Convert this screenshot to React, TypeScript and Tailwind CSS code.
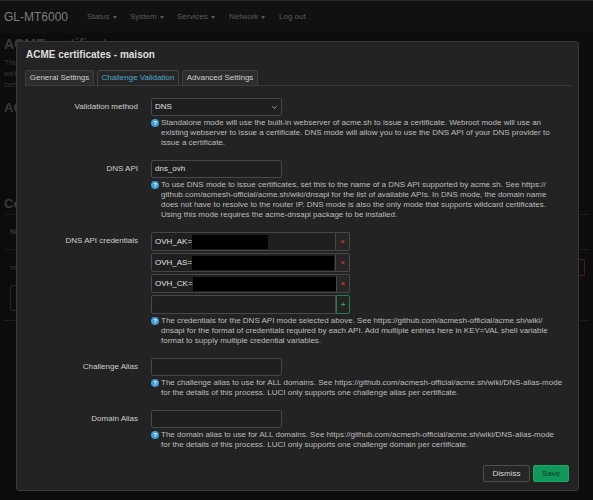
import { ChevronDown } from "lucide-react";

const helpValidation = [
  "Standalone mode will use the built-in webserver of acme.sh to issue a certificate. Webroot mode will use an",
  "existing webserver to issue a certificate. DNS mode will allow you to use the DNS API of your DNS provider to",
  "issue a certificate.",
];

const helpDnsApi = [
  "To use DNS mode to issue certificates, set this to the name of a DNS API supported by acme.sh. See https://",
  "github.com/acmesh-official/acme.sh/wiki/dnsapi for the list of available APIs. In DNS mode, the domain name",
  "does not have to resolve to the router IP. DNS mode is also the only mode that supports wildcard certificates.",
  "Using this mode requires the acme-dnsapi package to be installed.",
];

const helpCredentials = [
  "The credentials for the DNS API mode selected above. See https://github.com/acmesh-official/acme.sh/wiki/",
  "dnsapi for the format of credentials required by each API. Add multiple entries here in KEY=VAL shell variable",
  "format to supply multiple credential variables.",
];

const helpChallenge = [
  "The challenge alias to use for ALL domains. See https://github.com/acmesh-official/acme.sh/wiki/DNS-alias-mode",
  "for the details of this process. LUCI only supports one challenge alias per certificate.",
];

const helpDomain = [
  "The domain alias to use for ALL domains. See https://github.com/acmesh-official/acme.sh/wiki/DNS-alias-mode",
  "for the details of this process. LUCI only supports one challenge domain per certificate.",
];

const credentials = [
  { key: "OVH_AK=", hidden: 76 },
  { key: "OVH_AS=", hidden: 142 },
  { key: "OVH_CK=", hidden: 143 },
];

function Help({ lines }: { lines: string[] }) {
  return (
    <div className="mt-[2px] flex gap-[2px] text-[8px] leading-[10px] text-[#bdbdbd]">
      <span className="mt-[1px] flex h-[8px] w-[8px] shrink-0 items-center justify-center rounded-full bg-[#3d9bd4] text-[6px] font-bold leading-none text-white">
        ?
      </span>
      <div>
        {lines.map((l) => (
          <div key={l} className="whitespace-nowrap">
            {l}
          </div>
        ))}
      </div>
    </div>
  );
}

function Row({ label, children }: { label: string; children: React.ReactNode }) {
  return (
    <div className="flex">
      <div className="w-[113px] shrink-0 text-right text-[8px] leading-[18px] text-[#cfcfcf]">
        {label}
      </div>
      <div className="ml-[13px] flex flex-col">{children}</div>
    </div>
  );
}

function TextBox({ value }: { value?: string }) {
  return (
    <div className="flex h-[18px] w-[131px] items-center rounded-[2px] border border-[#474747] bg-[#1f1f1f] px-[3px] text-[8px] text-[#e0e0e0]">
      {value}
    </div>
  );
}

export default function App() {
  return (
    <div className="relative h-[500px] w-full overflow-hidden bg-[#0c0c0c] font-['Liberation_Sans',Arial,sans-serif]">
      {/* page behind the dialog, only its edges show */}
      <div className="flex h-[33px] items-center border-t border-[#262626] bg-[#111111]">
        <div className="pl-[4px] text-[12px] text-[#7d7d7d]">GL-MT6000</div>
        <nav className="ml-[19px] flex text-[8px] text-[#5a5a5a]">
          {[
            ["Status", "w-[43px]"],
            ["System", "w-[47px]"],
            ["Services", "w-[52px]"],
            ["Network", "w-[50px]"],
          ].map(([name, w]) => (
            <span key={name} className={`flex items-center ${w}`}>
              {name}
              <span className="ml-[3px] inline-block border-x-[2.5px] border-t-[3px] border-x-transparent border-t-[#5a5a5a]" />
            </span>
          ))}
          <span>Log out</span>
        </nav>
      </div>

      <div className="px-[4px]">
        <div className="mt-[2px] text-[14px] font-bold leading-[18px] text-[#3a3a3a]">ACME certificates</div>
        <div className="mt-[4px] text-[8px] leading-[11px] text-[#363636]">
          <div>This configures ACME (Letsencrypt) automatic certificate installation.</div>
          <div>webserver settings are configured with Letsencrypt-issued certificates.</div>
          <div>certificates can take a while.</div>
        </div>
        <div className="mt-[11px] text-[13px] font-bold leading-[14px] text-[#3a3a3a]">ACME global config</div>
        <div className="mt-[82px] text-[13px] font-bold leading-[14px] text-[#3a3a3a]">Certificate config</div>
        <div className="mt-[3px] border-t border-[#1c1c1c]">
          <div className="flex h-[35px] items-center border-b border-[#1c1c1c] pl-[6px] text-[8px] font-bold text-[#3a3a3a]">
            Name
          </div>
          <div className="flex h-[35px] items-center justify-between pl-[6px] text-[8px] text-[#3a3a3a]">
            <span>maison</span>
            <span className="mr-[4px] h-[17px] w-[40px] rounded-[2px] border border-[#4a1c1c]" />
          </div>
          <div className="ml-[6px] h-[26px] w-[90px] rounded-[2px] border border-[#262626]" />
          <div className="mt-[9px] border-t border-[#1c1c1c]" />
        </div>
      </div>

      {/* dialog */}
      <div className="absolute left-[16px] top-[41px] flex h-[450px] w-[563px] flex-col rounded-[3px] border border-[#383838] bg-[#232323] pb-[8px] pl-[8px] pr-[6px] pt-[6px]">
        <div className="pl-[1px] text-[10px] font-bold leading-[14px] text-[#dedede]">ACME certificates - maison</div>

        <div className="mt-[8px] flex items-end gap-[3px] border-b border-[#3a3a3a] text-[8px]">
          <div className="flex h-[15px] w-[69px] items-center justify-center rounded-t-[3px] border border-b-0 border-[#3f3f3f] bg-[#2d2d2d] text-[#d0d0d0]">
            General Settings
          </div>
          <div className="flex h-[15px] w-[82px] items-center justify-center rounded-t-[3px] border border-b-0 border-[#444444] bg-[#262626] text-[#4fa6cc]">
            Challenge Validation
          </div>
          <div className="flex h-[15px] w-[76px] items-center justify-center rounded-t-[3px] border border-b-0 border-[#3f3f3f] bg-[#2d2d2d] text-[#d0d0d0]">
            Advanced Settings
          </div>
        </div>

        <div className="flex flex-col gap-[12px] pt-[12px]">
          <Row label="Validation method">
            <div className="flex h-[18px] w-[131px] items-center justify-between rounded-[2px] border border-[#474747] bg-[#1f1f1f] pl-[3px] pr-[3px] text-[8px] text-[#e0e0e0]">
              DNS
              <ChevronDown size={7} strokeWidth={2.5} className="text-[#cfcfcf]" />
            </div>
            <Help lines={helpValidation} />
          </Row>

          <Row label="DNS API">
            <TextBox value="dns_ovh" />
            <Help lines={helpDnsApi} />
          </Row>

          <Row label="DNS API credentials">
            <div className="flex flex-col gap-[2px]">
              {credentials.map((c) => (
                <div key={c.key} className="flex h-[19px] w-[199px]">
                  <div className="flex flex-1 items-center rounded-l-[2px] border border-[#474747] bg-[#1f1f1f] pl-[3px] text-[8px] text-[#e0e0e0]">
                    {c.key}
                    <span className="h-[14px] bg-black" style={{ width: c.hidden }} />
                  </div>
                  <div className="flex w-[14px] items-center justify-center rounded-r-[2px] border border-l-0 border-[#474747] bg-[#262626] text-[7px] font-bold leading-none text-[#d2322d]">
                    ×
                  </div>
                </div>
              ))}
              <div className="flex h-[19px] w-[199px]">
                <div className="flex-1 rounded-l-[2px] border border-[#474747] bg-[#1f1f1f]" />
                <div className="flex w-[14px] items-center justify-center rounded-r-[2px] border border-[#1e8050] bg-[#232323] text-[8px] font-bold leading-none text-[#2aa36b]">
                  +
                </div>
              </div>
            </div>
            <Help lines={helpCredentials} />
          </Row>

          <Row label="Challenge Alias">
            <TextBox />
            <Help lines={helpChallenge} />
          </Row>

          <Row label="Domain Alias">
            <TextBox />
            <Help lines={helpDomain} />
          </Row>
        </div>

        <div className="mt-auto flex justify-end gap-[3px] pr-[3px] text-[8px]">
          <button className="h-[17px] w-[47px] rounded-[2px] border border-[#4d4d4d] bg-[#262626] text-[#d6d6d6]">
            Dismiss
          </button>
          <button className="h-[17px] w-[36px] rounded-[2px] border border-[#19a866] bg-[#11975a] text-[#0a3d24]">
            Save
          </button>
        </div>
      </div>
    </div>
  );
}
